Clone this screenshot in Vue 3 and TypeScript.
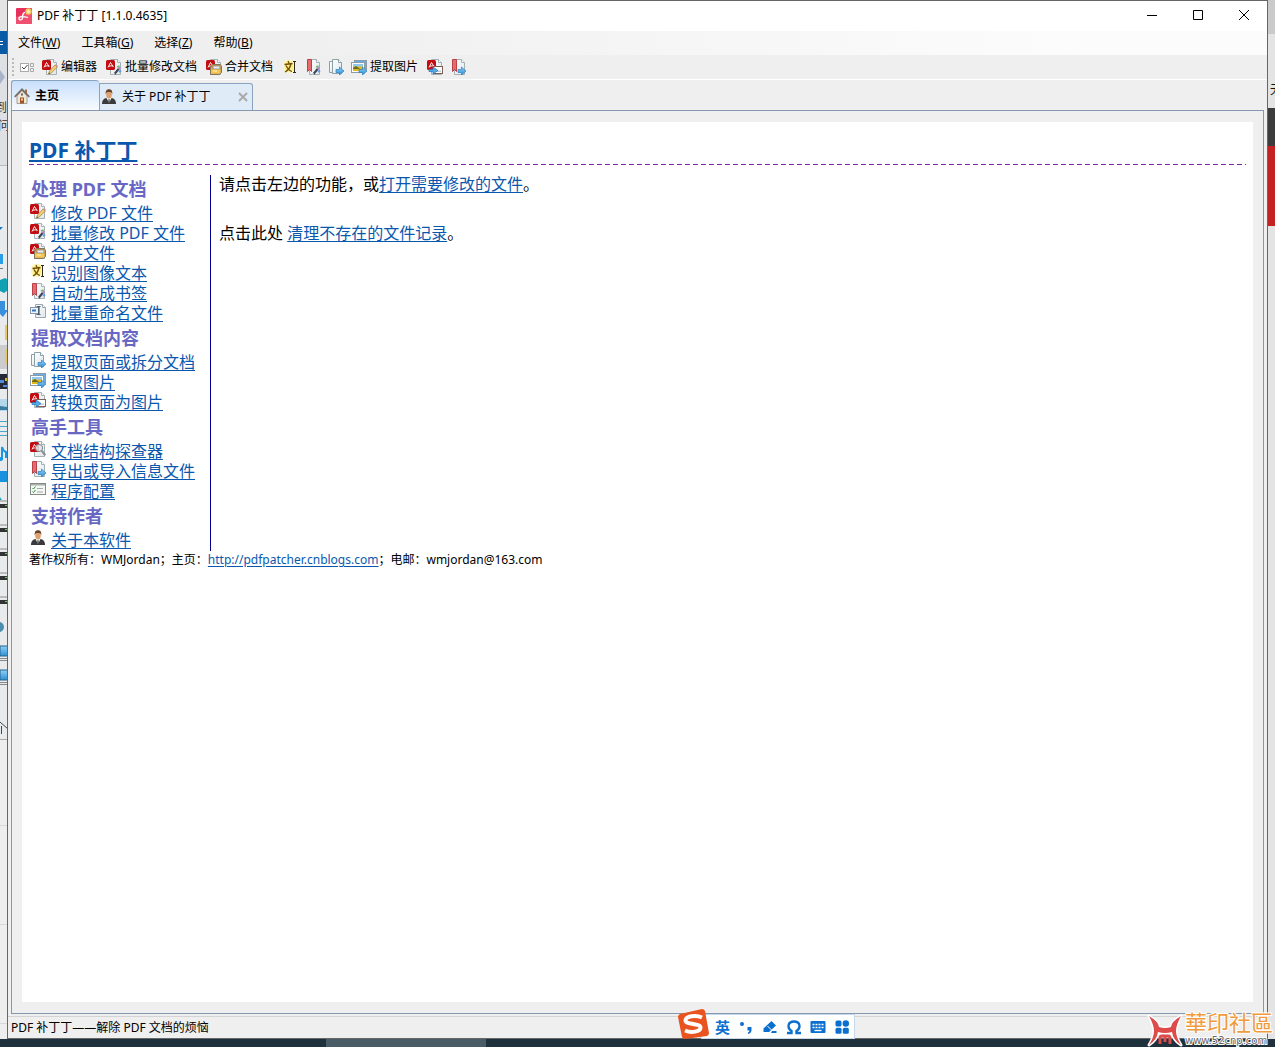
<script setup lang="ts">
interface Tool { icon: string; label?: string; title: string }
interface Entry { icon: string; label: string }
interface Group { title: string; items: Entry[] }

const menus = [
  { text: '文件', key: 'W' },
  { text: '工具箱', key: 'G' },
  { text: '选择', key: 'Z' },
  { text: '帮助', key: 'B' },
]

const tools: Tool[] = [
  { icon: 'edit', label: '编辑器', title: '编辑器' },
  { icon: 'batch', label: '批量修改文档', title: '批量修改文档' },
  { icon: 'merge', label: '合并文档', title: '合并文档' },
  { icon: 'ocr', title: '识别图像文本' },
  { icon: 'bookmark', title: '自动生成书签' },
  { icon: 'extract', title: '提取页面' },
  { icon: 'image', label: '提取图片', title: '提取图片' },
  { icon: 'convert', title: '转换页面为图片' },
  { icon: 'export', title: '导出或导入信息文件' },
]

const groups: Group[] = [
  {
    title: '处理 PDF 文档',
    items: [
      { icon: 'edit', label: '修改 PDF 文件' },
      { icon: 'batch', label: '批量修改 PDF 文件' },
      { icon: 'merge', label: '合并文件' },
      { icon: 'ocr', label: '识别图像文本' },
      { icon: 'bookmark', label: '自动生成书签' },
      { icon: 'rename', label: '批量重命名文件' },
    ],
  },
  {
    title: '提取文档内容',
    items: [
      { icon: 'extract', label: '提取页面或拆分文档' },
      { icon: 'image', label: '提取图片' },
      { icon: 'convert', label: '转换页面为图片' },
    ],
  },
  {
    title: '高手工具',
    items: [
      { icon: 'inspect', label: '文档结构探查器' },
      { icon: 'export', label: '导出或导入信息文件' },
      { icon: 'config', label: '程序配置' },
    ],
  },
  { title: '支持作者', items: [{ icon: 'person', label: '关于本软件' }] },
]

const racks = [504, 528, 552, 576, 600]
</script>

<template>
  <div class="desktop">
    <svg class="defs" aria-hidden="true">
      <defs>
        <linearGradient id="gPage" x1="0" y1="0" x2="1" y2="1"><stop offset="0" stop-color="#fff" /><stop offset="1" stop-color="#dfe6ea" /></linearGradient>
        <linearGradient id="gBlue" x1="0" y1="0" x2="0" y2="1"><stop offset="0" stop-color="#8fd0f5" /><stop offset="1" stop-color="#2f8ed6" /></linearGradient>
        <symbol id="s-page" viewBox="0 0 16 16">
          <path d="M4.500 .5h7l3 3v12h-10z" fill="url(#gPage)" stroke="#a3b0b4" />
          <path d="M11.500 .5v3h3" fill="#fff" stroke="#a3b0b4" />
        </symbol>
        <symbol id="s-red" viewBox="0 0 16 16">
          <rect x="0" y="1" width="9" height="10" rx="1.500" fill="#c20d12" />
          <path d="M2 8.500L4.500 3.500L7 7.500M3 7.300Q5 6.300 7.500 7.300" fill="none" stroke="#fff" stroke-width=".9" />
        </symbol>
        <symbol id="s-arrow" viewBox="0 0 16 16">
          <path d="M8 10.500h3.500V8L16 12l-4.500 4v-2.500H8z" fill="url(#gBlue)" stroke="#2b7fc0" stroke-width=".7" />
        </symbol>
        <symbol id="s-brush" viewBox="0 0 16 16">
          <path d="M8.500 15L13 9.500" stroke="#3f4450" stroke-width="2" /><path d="M12.500 10l1.800-2" stroke="#b48ad2" stroke-width="2.200" />
          <path d="M11 8l2.500-1" stroke="#6fbb62" stroke-width="1.500" /><path d="M13 13l2-1.500" stroke="#5f9be4" stroke-width="2" /><path d="M7.500 15.500l1-1.500" stroke="#ddd" />
        </symbol>
        <symbol id="i-edit" viewBox="0 0 16 16">
          <use href="#s-page" /><use href="#s-red" />
          <path d="M6.500 15l1-3L13 6l2.300 2-6 6z" fill="#f2cf72" stroke="#9b7d42" stroke-width=".7" />
          <path d="M13 6l1-1 2 2-.8 1z" fill="#d58a94" /><path d="M6.500 15l.5-1.500 1 1z" fill="#333" />
        </symbol>
        <symbol id="i-batch" viewBox="0 0 16 16">
          <use href="#s-page" /><use href="#s-red" /><use href="#s-brush" />
        </symbol>
        <symbol id="i-merge" viewBox="0 0 16 16">
          <use href="#s-page" /><use href="#s-red" />
          <path d="M4.500 8.500l2-3h8l1 2v6l-2 2h-9z" fill="#d9a94a" stroke="#80745e" />
          <path d="M7 7h7v3H7z" fill="#e8eef8" stroke="#777" stroke-width=".7" /><path d="M5 10.500h9v4H5z" fill="#f0c758" /><path d="M7 12h4" stroke="#fff2b5" />
        </symbol>
        <symbol id="i-ocr" viewBox="0 0 16 16">
          <rect x="1" y="1" width="12" height="13" rx="5" fill="#fff6b4" /><rect x="3" y="3" width="8" height="9" rx="3" fill="#ffee80" />
          <path d="M6 2l1 2M2.500 5.500l8-1M9 5c-1 4-3 6.500-6 8M4 6.500c1.500 3 3 5 6 6" fill="none" stroke="#6e4d0c" stroke-width="1.300" />
          <path d="M11 2.500h3M12.500 2.500v11M11 13.500h3" stroke="#2d2a20" />
        </symbol>
        <symbol id="i-bookmark" viewBox="0 0 16 16">
          <use href="#s-page" />
          <path d="M2.500 .5h4v12l-2-2-2 2z" fill="#e86a6c" stroke="#b84248" /><use href="#s-brush" />
        </symbol>
        <symbol id="i-export" viewBox="0 0 16 16">
          <use href="#s-page" /><path d="M2.500 .5h4v12l-2-2-2 2z" fill="#e86a6c" stroke="#b84248" /><use href="#s-arrow" />
        </symbol>
        <symbol id="i-extract" viewBox="0 0 16 16">
          <path d="M1.500 2.500h7v11h-7z" fill="url(#gPage)" stroke="#8aa1a8" />
          <path d="M4.500 .5h6l3 3v11h-9z" fill="url(#gPage)" stroke="#8aa1a8" /><path d="M10.500 .5v3h3" fill="#fff" stroke="#8aa1a8" /><use href="#s-arrow" />
        </symbol>
        <symbol id="i-image" viewBox="0 0 16 16">
          <rect x="3.500" y="1.500" width="12" height="9" fill="#6aaee9" stroke="#8b9ba8" />
          <rect x=".5" y="3.500" width="13" height="10" fill="#fff" stroke="#8b9ba8" />
          <path d="M2 5h10v3H2z" fill="#8fc9ef" /><path d="M2 7.500h10V12H2z" fill="#e3b91d" /><path d="M2 9l3-2 4 3H2z" fill="#6c6920" /><use href="#s-arrow" />
        </symbol>
        <symbol id="i-convert" viewBox="0 0 16 16">
          <use href="#s-page" /><use href="#s-red" />
          <rect x="6.500" y="7.500" width="9" height="7" fill="#fff" stroke="#7d5f55" /><path d="M8 11.500h6V13H8z" fill="#b4cdd9" />
          <path d="M2 10.500h4V8l5 3.500L6 15v-2.500H2z" fill="#55aae8" stroke="#2576b7" stroke-width=".7" />
        </symbol>
        <symbol id="i-rename" viewBox="0 0 16 16">
          <path d="M5.500 1.500h7l3 3v10h-10z" fill="url(#gPage)" stroke="#9aa9ae" /><path d="M12.500 1.500v3h3" fill="#fff" stroke="#9aa9ae" />
          <rect x=".5" y="4.500" width="9" height="6" fill="#edf5fc" stroke="#8797a8" /><path d="M2 7.500h4" stroke="#3475c2" stroke-width="2" />
          <path d="M6.500 3.500h4M8.500 3.500v8M6.500 11.500h4" stroke="#4e5d72" />
        </symbol>
        <symbol id="i-inspect" viewBox="0 0 16 16">
          <use href="#s-page" /><use href="#s-red" />
          <circle cx="9" cy="7" r="3.600" fill="#dfe5e9" fill-opacity=".85" stroke="#7f878d" /><path d="M11.500 9.500l3.800 4.800" stroke="#858b92" stroke-width="2" />
        </symbol>
        <symbol id="i-config" viewBox="0 0 16 16">
          <rect x=".5" y="2.500" width="15" height="11" fill="#f6f8f6" stroke="#848c86" /><path d="M1 3h14v1.500H1z" fill="#a7afa9" />
          <path d="M2.500 7l1 1 2-2.500M2.500 10.500l1 1 2-2.500" fill="none" stroke="#2d9337" /><path d="M7 7.500h6M7 11h6" stroke="#a4aaa5" />
        </symbol>
        <symbol id="i-person" viewBox="0 0 16 16">
          <path d="M1 15c0-4 2-5.500 4.500-6h5c2.500.5 4.500 2 4.500 6z" fill="#3a3a3c" /><path d="M5.500 9L8 14l2.500-5z" fill="#f4f4f4" /><path d="M7.500 10h1l.5 4H7z" fill="#555" />
          <ellipse cx="8" cy="5.500" rx="2.800" ry="4" fill="#dda06f" /><path d="M4.700 5.500C4.300 1.500 6 .3 8 .3s3.700 1.200 3.300 5.200C11 3.500 10 3 8 3s-3 .5-3.300 2.500z" fill="#65462d" />
        </symbol>
        <symbol id="i-home" viewBox="0 0 16 16">
          <path d="M11 1.500h2V6h-2z" fill="#b06a42" /><path d="M3 8l5-5.500L13 8v7.500H3z" fill="#f1e7d8" stroke="#9b8b7a" stroke-width=".8" />
          <path d="M.7 8.800L8 1.300l7.300 7.500" fill="none" stroke="#77716d" stroke-width="1.700" /><path d="M6 9.500h4v6H6z" fill="#9c5428" /><path d="M7 10.500h2v2H7z" fill="#ffd28b" /><rect x="7" y="5.500" width="2" height="2" fill="#6d625a" />
        </symbol>
      </defs>
    </svg>

    <div class="screen">
      <svg class="behind-left" aria-hidden="true">
        <rect width="8" height="740" fill="#e9eaec" /><rect width="8" height="31" fill="#e4e4e4" />
        <rect y="31" width="8" height="23" fill="#0a5ba5" /><path d="M0 41.500h3M0 44.500h3" stroke="#fff" />
        <rect y="54" width="8" height="111" fill="#dee0e4" /><path d="M0 70l5 7-5 7z" fill="#a8b3ca" />
        <text x="-5" y="112" font-size="12" fill="#333">到</text><text x="-2" y="130" font-size="12" fill="#333">问</text>
        <path d="M0 165.500h8" stroke="#bbb" /><path d="M0 227h3l-3 3z" fill="#1675bd" />
        <rect y="254" width="3" height="10" fill="#2a9ee7" /><path d="M0 268.500h3" stroke="#777" />
        <path d="M0 280l5-2 3 2v10l-4 3-4-2z" fill="#12a0b3" /><path d="M0 301h5v9h3l-5 7-3-3z" fill="#398fda" />
        <rect y="345" width="8" height="24" fill="#ccc" /><path d="M5 325h3v15H5zM5 349h3v15H5z" fill="#e8c76b" />
        <rect y="374" width="8" height="15" fill="#252936" /><path d="M0 380h4v3H0zM3 385h4v2H3z" fill="#4e8bd8" /><path d="M5 378h2v3H5z" fill="#d5ba38" />
        <rect y="399" width="8" height="12" fill="#b5d7ec" /><path d="M0 406l8 1v3H0z" fill="#397ca0" />
        <path d="M0 421.500h8M0 426.500h8M0 431.500h8M0 435.500h8" stroke="#4aa5cb" />
        <path d="M2 460v-13q1 4 4 5v6" fill="none" stroke="#1b98e5" stroke-width="2" /><ellipse cx="0" cy="459" rx="3" ry="2" fill="#1b98e5" /><rect y="471" width="8" height="11" fill="#1891de" />
        <path d="M0 497l2 3-2 2z" fill="#26a6bd" />
        <g v-for="y in racks" :key="y"><rect :y="y - 4" width="8" height="2" fill="#bbb" /><rect :y="y" width="8" height="4" fill="#333" /><rect x="5" :y="y + 1" width="2" height="1" fill="#4fe25e" /></g>
        <circle cx="-1" cy="627" r="5" fill="#4a8faf" />
        <g v-for="y in [646, 670]" :key="y"><rect :y="y" width="8" height="10" fill="url(#gBlue)" stroke="#23668f" /><path :d="`M0 ${y + 12.5}h8M0 ${y + 14.5}h8`" stroke="#888" /></g>
        <path d="M0 722l8 7M1.500 726v8" fill="none" stroke="#445" /><rect y="740" width="8" height="300" fill="#eee" /><path d="M0 739.500h8" stroke="#aaa" /><path d="M0 825.500h8M0 924.500h8M0 1023.500h8" stroke="#d8d8d8" />
      </svg>

      <main class="window">
        <header class="titlebar">
          <svg class="logo" viewBox="0 0 16 16" aria-hidden="true">
            <rect width="16" height="16" rx="1" fill="#e8305c" /><path d="M0 9L16 3v12l-1 1H1l-1-1z" fill="#f05070" />
            <path d="M9 4.500c-2 0-2.500 3-2.500 5.500S3 12.500 3 10.500 7 8 12 9.500" fill="none" stroke="#fff" stroke-width="1.300" /><circle cx="12.500" cy="3.500" r="3.200" fill="#f6c560" /><circle cx="12.500" cy="3.500" r="1.500" fill="#fff6cc" />
          </svg>
          <span class="caption">PDF 补丁丁 [1.1.0.4635]</span>
          <button class="winbtn" aria-label="最小化"><svg viewBox="0 0 12 12"><path d="M1 5.500h10" /></svg></button>
          <button class="winbtn" aria-label="最大化"><svg viewBox="0 0 12 12"><path d="M1.500 .5h9v9h-9z" /></svg></button>
          <button class="winbtn" aria-label="关闭"><svg viewBox="0 0 12 12"><path d="M1 0l10 10M11 0L1 10" /></svg></button>
        </header>

        <nav class="menubar">
          <button v-for="m in menus" :key="m.key">{{ m.text }}(<u>{{ m.key }}</u>)</button>
        </nav>

        <div class="toolbar">
          <i class="grip"></i>
          <button title="选择">
            <svg class="icon" viewBox="0 0 16 16"><rect x="1.500" y="4.500" width="8" height="8" fill="#fff" stroke="#aaa" /><path d="M3 8l2 2 3.500-4" fill="none" stroke="#444" /><path d="M11.500 4.500h3v3h-3zM11.500 9.500h3v3h-3z" fill="none" stroke="#aaa" /></svg>
          </button>
          <button v-for="t in tools" :key="t.icon" :title="t.title" :class="{ labelled: t.label }">
            <svg class="icon"><use :href="'#i-' + t.icon" /></svg><span v-if="t.label">{{ t.label }}</span>
          </button>
        </div>

        <div class="tabs" role="tablist">
          <button class="tab active" role="tab" aria-selected="true"><svg class="icon"><use href="#i-home" /></svg><span>主页</span></button>
          <button class="tab" role="tab" aria-selected="false">
            <svg class="icon"><use href="#i-person" /></svg><span>关于 PDF 补丁丁</span>
            <svg class="close" viewBox="0 0 10 10"><path d="M1 1l8 8M9 1L1 9" /></svg>
          </button>
        </div>

        <section class="panel">
          <div class="page">
            <h1><a href="#">PDF 补丁丁</a></h1>
            <div class="columns">
              <aside>
                <template v-for="g in groups" :key="g.title">
                  <h2>{{ g.title }}</h2>
                  <ul>
                    <li v-for="e in g.items" :key="e.label"><svg class="icon"><use :href="'#i-' + e.icon" /></svg><a href="#">{{ e.label }}</a></li>
                  </ul>
                </template>
              </aside>
              <article>
                <p>请点击左边的功能，或<a href="#">打开需要修改的文件</a>。</p>
                <p>点击此处 <a href="#">清理不存在的文件记录</a>。</p>
              </article>
            </div>
            <footer>著作权所有：WMJordan；主页：<a href="#">http://pdfpatcher.cnblogs.com</a>；电邮：wmjordan@163.com</footer>
          </div>
        </section>

        <div class="status">PDF 补丁丁——解除 PDF 文档的烦恼</div>
      </main>

      <svg class="behind-right" aria-hidden="true">
        <rect width="8" height="1040" fill="#e4e4e4" /><rect width="8" height="34" fill="#cacaca" />
        <text x="2" y="94" font-size="12" fill="#111">无</text>
        <rect y="108" width="8" height="38" fill="#3c3c3c" /><rect y="146" width="8" height="80" fill="#c42222" />
      </svg>
    </div>

    <div class="taskbar"><i></i></div>

    <div class="ime">
      <svg class="sogou" viewBox="0 0 32 30" aria-hidden="true">
        <path d="M3 5L25 0q2 0 3 2l4 22q0 2-2 3L8 30q-2 0-3-2L1 8q0-2 2-3z" fill="#e9531f" />
        <path d="M25 8.500C19 5.500 8.500 7 8.500 11.500s15 2.500 15 7-9.500 5.500-15.500 3" fill="none" stroke="#fff" stroke-width="4" />
      </svg>
      <div class="imebar">
        <button>英</button>
        <button aria-label="标点"><svg viewBox="0 0 16 16"><circle cx="4" cy="5" r="2" /><path d="M9.500 8h4v3q0 3-3.500 4v-1.500q1.500-.5 1.500-2H9.500z" /></svg></button>
        <button aria-label="手写"><svg viewBox="0 0 16 16"><path d="M9.500 2l4.500 4.500L7 13H1.500V9.500zM10 12h4.500v2H9z" /><path d="M5.500 7l4 4" stroke="#fff" /></svg></button>
        <button aria-label="符号"><svg viewBox="0 0 16 16"><path d="M1 14h4.500v-2C1 9 1.500 2.500 8 2.500S15 9 10.500 12v2H15" fill="none" stroke="#0b6fd0" stroke-width="2.400" /></svg></button>
        <button aria-label="键盘"><svg viewBox="0 0 16 16"><rect x=".5" y="2" width="15" height="12" rx="1" /><path d="M2.500 5.500h11M2.500 8.500h11" stroke="#fff" stroke-width="1.600" stroke-dasharray="2 1" /><path d="M4.500 11.500h7" stroke="#fff" stroke-width="1.400" /></svg></button>
        <button aria-label="工具箱"><svg viewBox="0 0 16 16"><rect x="1.500" y="1.500" width="6" height="6" rx="1.500" /><circle cx="11.800" cy="4.500" r="3.200" /><rect x="1.500" y="8.800" width="6" height="6" rx="1.500" /><rect x="8.800" y="8.800" width="6" height="6" rx="1.500" /></svg></button>
      </div>
    </div>

    <div class="watermark">
      <svg viewBox="0 0 36 34" aria-hidden="true">
        <path d="M2 3Q12 9 12 14Q18 16 24 14Q24 9 34 3Q29 12 29 18T34 32Q26 27 25 19Q18 21 11 19Q10 27 2 32Q7 24 7 18T2 3z" fill="#dd4b4b" stroke="#fff" stroke-width="3" stroke-linejoin="round" paint-order="stroke" />
        <path d="M13 31v-6q0-2 2-2h6q2 0 2 2v6M18 24v5" fill="none" stroke="#dd4b4b" stroke-width="3" />
      </svg>
      <div class="wmtext"><strong>華印社區</strong><span>www.52cnp.com</span></div>
    </div>
  </div>
</template>

<style>
body { margin: 0; overflow: hidden; }
</style>

<style scoped>
.desktop { position: relative; display: flex; flex-direction: column; height: 100vh; background: #eee; color: #000; font: 12px/16px "Noto Sans", "Noto Sans CJK SC", sans-serif; overflow: hidden; }
.defs { position: absolute; width: 0; height: 0; }
button { display: flex; align-items: center; margin: 0; padding: 0; border: 0; background: none; color: inherit; font: inherit; white-space: nowrap; }
a { color: #0a58ae; text-underline-offset: 2px; }
.icon { flex: none; width: 16px; height: 16px; }
.screen { flex: 1; display: flex; min-height: 0; }
.behind-left { flex: none; width: 7px; height: 100%; overflow: hidden; }
.behind-right { flex: none; width: 7px; height: 100%; overflow: hidden; }
.window { flex: 1; display: flex; flex-direction: column; min-width: 0; box-sizing: border-box; border: 1px solid #666; background: #efefef; }

.titlebar { display: flex; align-items: center; height: 30px; padding-left: 8px; background: #fff; }
.logo { width: 16px; height: 16px; margin-right: 5px; }
.caption { flex: 1; }
.winbtn { justify-content: center; width: 46px; height: 30px; }
.winbtn svg { width: 12px; height: 12px; fill: none; stroke: #000; }

.menubar { display: flex; align-items: center; gap: 21px; height: 24px; padding-left: 10px; background: linear-gradient(90deg, #efefef 20%, #fcfcfc 85%); }
.menubar u { text-underline-offset: 1px; }

.toolbar { display: flex; align-items: center; gap: 7px; height: 24px; padding-left: 4px; border-bottom: 1px solid #fff; }
.toolbar button { gap: 3px; }
.toolbar .labelled { margin-right: 2px; }
.grip { width: 2px; height: 18px; margin-right: -2px; background: repeating-linear-gradient(#bbb 0 2px, transparent 2px 4px); }

.tabs { display: flex; align-items: flex-end; height: 30px; padding-left: 3px; }
.tab { box-sizing: border-box; height: 27px; width: 154px; padding-left: 1px; gap: 5px; border: 1px solid #8aa4c0; border-bottom: 0; border-radius: 0 3px 0 0; background: #e0ebf8; }
.tab.active { height: 30px; width: 88px; padding-left: 2px; border-radius: 3px 3px 0 0; border-right: 0; background: linear-gradient(#c8dffb, #f8fbff); font-weight: bold; }
.close { width: 10px; height: 10px; margin-left: auto; margin-right: 4px; fill: none; stroke: #aaa; stroke-width: 2; }

.panel { flex: 1; display: flex; margin: 0 3px; padding: 11px 10px; border: 1px solid #8499b0; min-height: 0; }
.page { flex: 1; padding: 16px 7px; background: #fff; }
h1 { margin: 0; height: 27px; font-size: 21px; line-height: 24px; background: repeating-linear-gradient(90deg, #7a2a9a 0 5px, transparent 5px 8px) left bottom / 100% 1px no-repeat; }
.columns { display: flex; margin-top: 10px; }
aside { box-sizing: border-box; width: 182px; border-right: 1px solid #000090; }
h2 { margin: 0; height: 28px; padding-left: 2px; color: #6868c4; font-size: 18px; line-height: 28px; }
ul { margin: 0; padding: 0 0 1px 1px; list-style: none; }
li { display: flex; gap: 5px; height: 20px; font-size: 16px; line-height: 20px; white-space: nowrap; }
article { flex: 1; padding-left: 8px; font-size: 16px; line-height: 18px; }
p { margin: 0 0 31px; }
footer { line-height: 18px; }
.status { box-sizing: border-box; height: 22px; margin-top: 2px; padding: 3px; border-top: 1px solid #d4d4d4; }

.taskbar { flex: none; display: flex; justify-content: flex-start; height: 8px; background: #1e313c; }
.taskbar i { width: 160px; margin-left: 326px; background: #4a5c66; }

.ime { position: absolute; left: 677px; bottom: 8px; display: flex; align-items: flex-end; }
.sogou { position: relative; width: 32px; height: 30px; }
.imebar { box-sizing: border-box; display: flex; align-items: center; gap: 8px; height: 25px; margin-left: -8px; padding: 0 4px 0 13px; border: 1px solid #c6d9ec; background: #fff; }
.imebar button { color: #0b6fd0; font-weight: bold; font-size: 15px; }
.imebar svg { width: 16px; height: 16px; fill: #0b6fd0; }

.watermark { position: absolute; right: 2px; bottom: 0; display: flex; align-items: flex-end; gap: 2px; }
.watermark svg { width: 36px; height: 34px; }
.wmtext { display: flex; flex-direction: column; color: #666; font: 10px/12px "DejaVu Sans", sans-serif; -webkit-text-stroke: 2px #fff; paint-order: stroke fill; }
.wmtext strong { color: #f09a3c; font: 22px/25px "Noto Sans", "Noto Sans CJK TC", sans-serif; }
</style>
